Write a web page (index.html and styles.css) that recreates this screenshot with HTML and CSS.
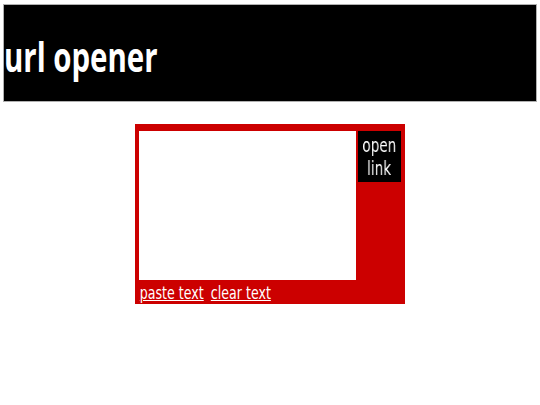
FILE: index.html
```html
<!DOCTYPE html>
<html>
<head>
<meta charset="utf-8">
<title>url opener</title>
<link rel="stylesheet" href="styles.css">
</head>
<body>
<header class="header">
  <h1 class="title">url opener</h1>
</header>
<main class="main">
  <div class="panel">
    <div class="row">
      <textarea class="input"></textarea>
      <div class="open" role="button"><span class="open-line">open</span><span class="open-line">link</span></div>
    </div>
    <div class="links">
      <a href="#" class="link">paste text</a>
      <a href="#" class="link">clear text</a>
    </div>
  </div>
</main>
</body>
</html>
```

FILE: styles.css
```css
html, body {
  margin: 0;
  padding: 0;
  background: #fff;
}
body {
  padding: 4px 3px 0 3px;
  font-family: "DejaVu Sans Condensed", "DejaVu Sans", sans-serif;
}
.header {
  background: #000;
  border: 1px solid #b0b0b0;
  height: 96px;
  display: flex;
  align-items: center;
  overflow: hidden;
}
.title {
  margin: 0;
  color: #fff;
  font-family: "Open Sans", sans-serif;
  font-weight: 700;
  font-size: 42px;
  line-height: 1;
  padding-top: 6px;
  transform: scaleX(0.7);
  transform-origin: left center;
  white-space: nowrap;
}
.main {
  display: flex;
  justify-content: center;
  padding-top: 22px;
}
.panel {
  background: #cc0000;
  width: 270px;
  height: 180px;
  box-sizing: border-box;
  padding: 7px 4px 0 4px;
  display: flex;
  flex-direction: column;
}
.row {
  display: flex;
  align-items: flex-start;
  gap: 2px;
}
.input {
  width: 217px;
  height: 149px;
  box-sizing: border-box;
  border: none;
  margin: 0;
  padding: 2px;
  background: #fff;
  resize: none;
  outline: none;
}
.open {
  width: 43px;
  height: 51px;
  background: #000;
  display: flex;
  flex-direction: column;
  align-items: center;
  justify-content: center;
  overflow: hidden;
  cursor: pointer;
}
.open-line {
  display: block;
  color: #ffffff;
  font-family: "DejaVu Sans Condensed", "DejaVu Sans", sans-serif;
  font-size: 19px;
  line-height: 23px;
  transform: scaleX(0.8) translateZ(0);
  will-change: transform;
  white-space: nowrap;
}
.links {
  display: flex;
  gap: 9px;
  padding-top: 3px;
  padding-left: 1px;
  transform: scaleX(0.78);
  transform-origin: left center;
}
.link {
  color: #fff;
  font-size: 18px;
  line-height: 20px;
  text-decoration: underline;
  white-space: nowrap;
}
```
